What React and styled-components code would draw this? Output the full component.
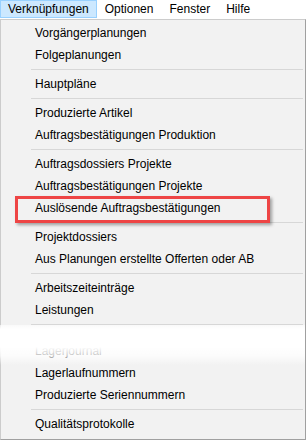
import React from "react";
import styled, { createGlobalStyle } from "styled-components";

const GlobalStyle = createGlobalStyle`
  html, body { margin: 0; padding: 0; background: #ffffff; }
  body {
    font-family: "Liberation Sans", Arial, sans-serif;
    font-size: 12px;
    color: #000;
  }
  * { box-sizing: border-box; }
`;

const Screen = styled.div`
  width: 306px;
  height: 440px;
  overflow: hidden;
  background: #ffffff;
  display: flex;
  flex-direction: column;
`;

const MenuBar = styled.div`
  height: 19px;
  display: flex;
  align-items: flex-start;
  background: #ffffff;
`;

const MenuBarItem = styled.div`
  height: 18px;
  line-height: 17px;
  padding: 0 7px;
  border: 1px solid ${(p) => (p.$active ? "#99d1ff" : "transparent")};
  background: ${(p) => (p.$active ? "#cce8ff" : "transparent")};
  white-space: nowrap;
`;

const Dropdown = styled.div`
  width: 306px;
  flex: 1;
  background: #f2f2f2;
  border: 1px solid #cccccc;
  border-right-color: #a0a0a0;
  border-bottom-color: #a0a0a0;
  padding: 2px 0 3px 0;
  display: flex;
  flex-direction: column;
`;

const Item = styled.div`
  position: relative;
  height: 22px;
  flex: none;
  display: flex;
  align-items: center;
  padding-left: 34px;
  white-space: nowrap;
  color: #000;
`;

const Separator = styled.div`
  flex: none;
  height: 1px;
  margin: 3px 2px 3px 30px;
  background: #d7d7d7;
`;

const Callout = styled.div`
  position: absolute;
  left: 14px;
  top: -1px;
  width: 255px;
  height: 27px;
  border: 3px solid #ee4545;
  box-shadow: 2px 2px 3px rgba(0, 0, 0, 0.35);
  pointer-events: none;
`;

const FadeGroup = styled.div`
  position: relative;
  display: flex;
  flex-direction: column;
`;

const Gap = styled.div`
  height: 12px;
  flex: none;
`;

const FadeOverlay = styled.div`
  position: absolute;
  left: -1px;
  right: 0;
  top: -3px;
  height: 40px;
  background: linear-gradient(
    to bottom,
    rgba(255, 255, 255, 0.6) 0px,
    #ffffff 4px,
    #ffffff 22px,
    rgba(255, 255, 255, 0.75) 31px,
    rgba(255, 255, 255, 0) 40px
  );
  pointer-events: none;
`;

const menuBar = ["Verknüpfungen", "Optionen", "Fenster", "Hilfe"];

export default function App() {
  return (
    <>
      <GlobalStyle />
      <Screen>
        <MenuBar>
          {menuBar.map((m, i) => (
            <MenuBarItem key={m} $active={i === 0}>
              {m}
            </MenuBarItem>
          ))}
        </MenuBar>
        <Dropdown>
          <Item>Vorgängerplanungen</Item>
          <Item>Folgeplanungen</Item>
          <Separator />
          <Item>Hauptpläne</Item>
          <Separator />
          <Item>Produzierte Artikel</Item>
          <Item>Auftragsbestätigungen Produktion</Item>
          <Separator />
          <Item>Auftragsdossiers Projekte</Item>
          <Item>Auftragsbestätigungen Projekte</Item>
          <Item>
            Auslösende Auftragsbestätigungen
            <Callout />
          </Item>
          <Separator />
          <Item>Projektdossiers</Item>
          <Item>Aus Planungen erstellte Offerten oder AB</Item>
          <Separator />
          <Item>Arbeitszeiteinträge</Item>
          <Item>Leistungen</Item>
          <Separator />
          <FadeGroup>
            <Gap />
            <Item>Lagerjournal</Item>
            <FadeOverlay />
          </FadeGroup>
          <Item>Lagerlaufnummern</Item>
          <Item>Produzierte Seriennummern</Item>
          <Separator />
          <Item>Qualitätsprotokolle</Item>
        </Dropdown>
      </Screen>
    </>
  );
}
